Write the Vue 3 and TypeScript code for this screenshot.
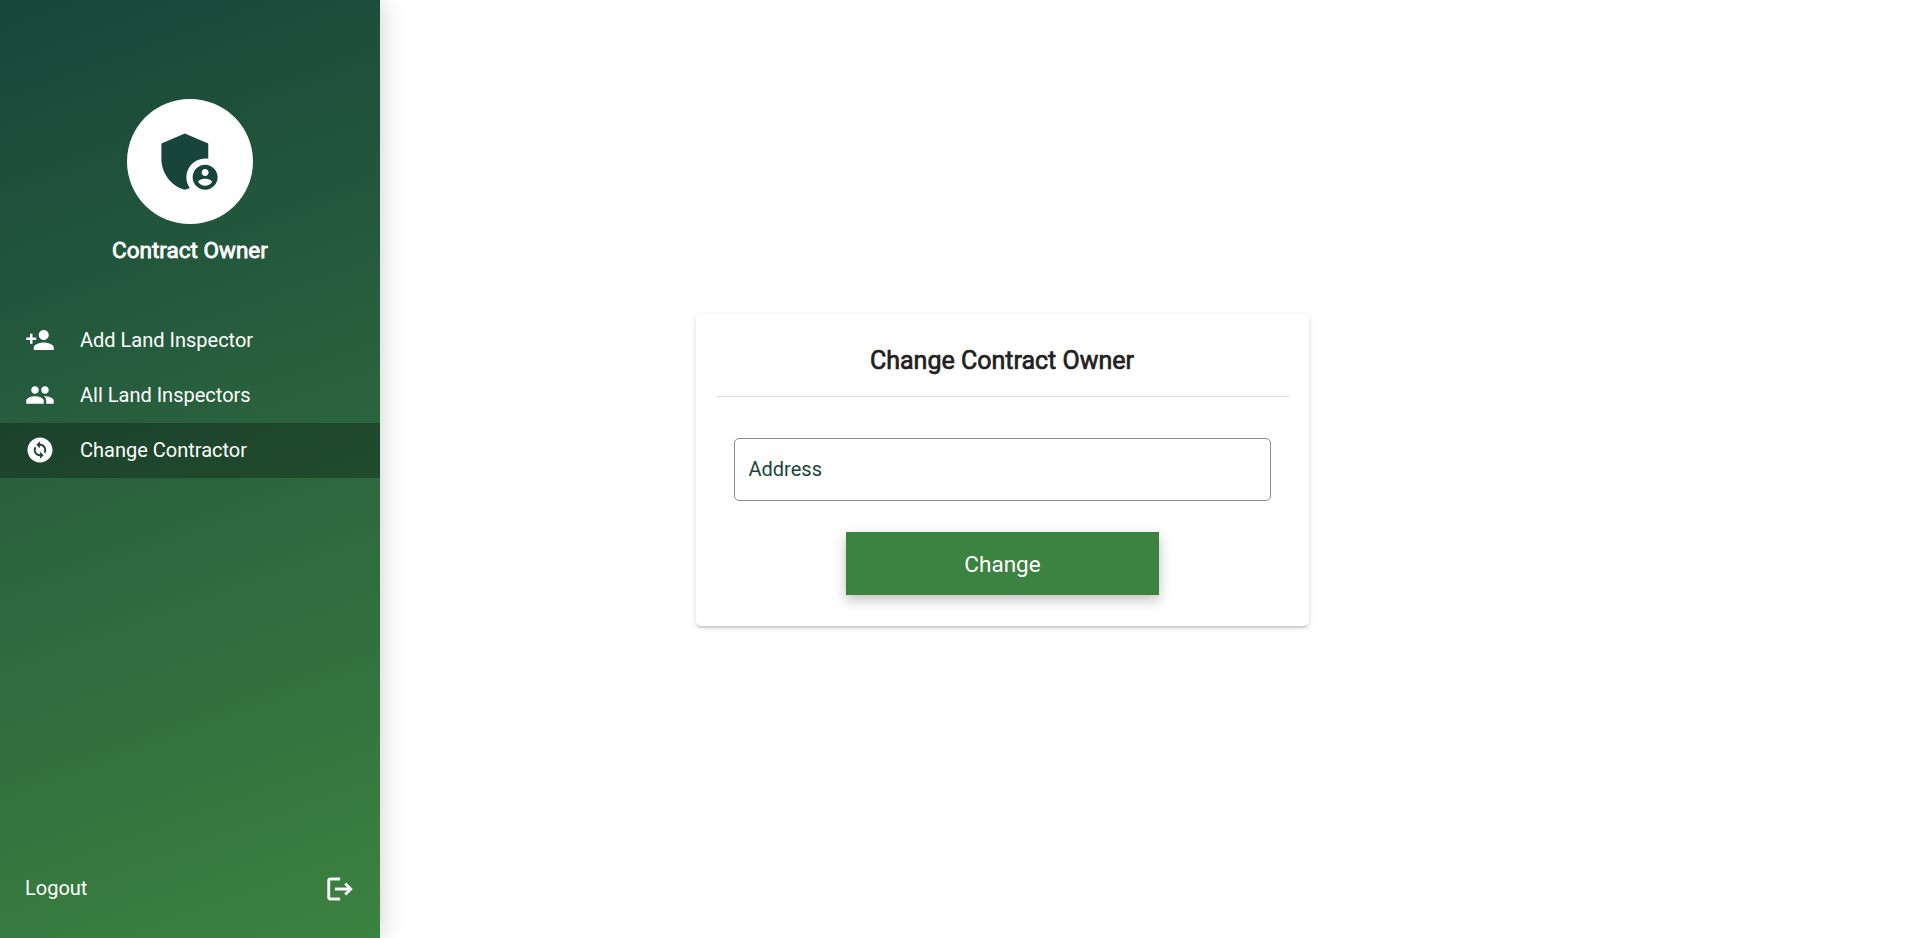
<script setup lang="ts">
import { ref } from 'vue'

interface NavItem {
  label: string
  path: string
  active?: boolean
}

const address = ref('')

const items: NavItem[] = [
  {
    label: 'Add Land Inspector',
    path: 'M15 12c2.21 0 4-1.79 4-4s-1.79-4-4-4-4 1.79-4 4 1.79 4 4 4zm-9-2V7H4v3H1v2h3v3h2v-3h3v-2H6zm9 4c-2.67 0-8 1.34-8 4v2h16v-2c0-2.66-5.33-4-8-4z',
  },
  {
    label: 'All Land Inspectors',
    path: 'M16 11c1.66 0 2.99-1.34 2.99-3S17.66 5 16 5c-1.66 0-3 1.34-3 3s1.34 3 3 3zm-8 0c1.66 0 2.99-1.34 2.99-3S9.66 5 8 5C6.34 5 5 6.34 5 8s1.34 3 3 3zm0 2c-2.33 0-7 1.17-7 3.5V19h14v-2.5c0-2.33-4.67-3.5-7-3.5zm8 0c-.29 0-.62.02-.97.05 1.16.84 1.97 1.97 1.97 3.45V19h6v-2.5c0-2.33-4.67-3.5-7-3.5z',
  },
  {
    label: 'Change Contractor',
    active: true,
    path: 'M12 2C6.48 2 2 6.48 2 12c0 5.52 4.48 10 10 10s10-4.48 10-10C22 6.48 17.52 2 12 2zm.06 17v-2.01H12c-1.28 0-2.56-.49-3.54-1.46-1.71-1.71-1.92-4.35-.64-6.29l1.1 1.1c-.71 1.33-.53 3.01.59 4.13.7.7 1.62 1.03 2.54 1.01v-2.14l2.83 2.83L12.06 19zm4.11-4.24l-1.1-1.1c.71-1.33.53-3.01-.59-4.13C13.79 8.84 12.9 8.5 12 8.5h-.06v2.15L9.11 7.83 11.94 5v2.02c1.3-.02 2.61.45 3.6 1.45 1.7 1.7 1.91 4.35.63 6.29z',
  },
]
</script>

<template>
  <div class="layout">
    <aside class="sidebar">
      <div class="profile">
        <div class="avatar">
          <svg viewBox="0 0 24 24">
            <path d="M17 11c.34 0 .67.04 1 .09V6.27L10.5 3 3 6.27v4.91c0 4.54 3.2 8.79 7.5 9.82.55-.13 1.08-.32 1.6-.55-.69-.98-1.1-2.17-1.1-3.45 0-3.31 2.69-6 6-6z" />
            <path d="M17 13c-2.21 0-4 1.79-4 4s1.79 4 4 4 4-1.79 4-4-1.79-4-4-4zm0 1.38c.62 0 1.12.51 1.12 1.12s-.51 1.12-1.12 1.12-1.12-.51-1.12-1.12.5-1.12 1.12-1.12zm0 5.37c-.93 0-1.74-.46-2.24-1.17.05-.72 1.51-1.08 2.24-1.08s2.19.36 2.24 1.08c-.5.71-1.31 1.17-2.24 1.17z" />
          </svg>
        </div>
        <div class="role">Contract Owner</div>
      </div>
      <nav class="nav">
        <a v-for="item in items" :key="item.label" class="item" :class="{ active: item.active }">
          <svg viewBox="0 0 24 24"><path :d="item.path" /></svg>
          <span>{{ item.label }}</span>
        </a>
      </nav>
      <a class="logout">
        <span>Logout</span>
        <svg viewBox="0 0 24 24">
          <path d="M17 7l-1.41 1.41L18.17 11H8v2h10.17l-2.58 2.58L17 17l5-5zM4 5h8V3H4c-1.1 0-2 .9-2 2v14c0 1.1.9 2 2 2h8v-2H4V5z" />
        </svg>
      </a>
    </aside>
    <main class="content">
      <form class="card" @submit.prevent>
        <h1 class="title">Change Contract Owner</h1>
        <input v-model="address" class="field" type="text" placeholder="Address" />
        <button class="submit" type="submit">Change</button>
      </form>
    </main>
  </div>
</template>

<style>
body {
  margin: 0;
  background: #fff;
}
</style>

<style scoped>
.layout {
  display: flex;
  height: 938px;
  overflow: hidden;
  font-family: Roboto, sans-serif;
  font-size: 20px;
}
.layout * {
  box-sizing: border-box;
}
.sidebar {
  display: flex;
  flex-direction: column;
  flex: 0 0 380px;
  color: #fff;
  background: linear-gradient(160deg, #18453b, #3c8240);
  box-shadow: 0 0 25px rgba(0, 0, 0, 0.2);
}
svg {
  display: block;
  flex: none;
  width: 30px;
  height: 30px;
  fill: currentColor;
}
.profile {
  display: flex;
  flex-direction: column;
  align-items: center;
  height: 312.5px;
  padding-top: 99px;
}
.avatar {
  display: flex;
  align-items: center;
  justify-content: center;
  width: 125.5px;
  height: 125px;
  border-radius: 50%;
  color: #18453b;
  background: #fff;
}
.avatar svg {
  width: 75px;
  height: 75px;
  margin-right: 1px;
}
.role {
  margin-top: 11px;
  font-size: 22.5px;
  font-weight: 400;
  line-height: 30px;
  -webkit-text-stroke: 0.8px currentColor;
}
.item {
  display: flex;
  align-items: center;
  gap: 25px;
  height: 55px;
  padding: 0 25px;
}
.item.active {
  background: rgba(0, 0, 0, 0.28);
}
.logout {
  display: flex;
  align-items: center;
  justify-content: space-between;
  height: 50px;
  margin-top: auto;
  margin-bottom: 24px;
  padding: 0 25px;
}
.logout span {
  padding-bottom: 2px;
}
.logout svg {
  stroke: currentColor;
  stroke-width: 0.3;
}
.content {
  display: flex;
  flex: 1;
  align-items: center;
  padding: 2px 0 0 316px;
}
.card {
  display: flex;
  flex-direction: column;
  align-items: center;
  width: 613px;
  height: 312px;
  padding: 19px;
  border-radius: 5px;
  background: #fff;
  box-shadow: 0 3px 1px -1px rgba(0, 0, 0, 0.08), 0 1px 2px rgba(0, 0, 0, 0.08),
    0 2px 6px rgba(0, 0, 0, 0.12);
}
.title {
  width: 575px;
  height: 64px;
  margin: 0;
  padding-right: 1px;
  border-bottom: 1px solid #e0e0e0;
  color: rgb(33, 33, 33);
  font-size: 25px;
  font-weight: 400;
  line-height: 56px;
  text-align: center;
  -webkit-text-stroke: 0.7px currentColor;
}
.field {
  width: 537px;
  height: 63px;
  margin: 41px 1px 31px 0;
  padding: 0 14px 1px;
  border: 1px solid #8c8c8c;
  border-radius: 5px;
  background: transparent;
  font: inherit;
  outline: none;
}
.field::placeholder {
  color: #18453b;
  opacity: 1;
}
.submit {
  width: 313px;
  height: 63px;
  padding: 0;
  border: 0;
  color: #fff;
  background: #3c8240;
  box-shadow: 0 5px 12px rgba(0, 0, 0, 0.25);
  font: inherit;
  font-size: 22.5px;
}
</style>
